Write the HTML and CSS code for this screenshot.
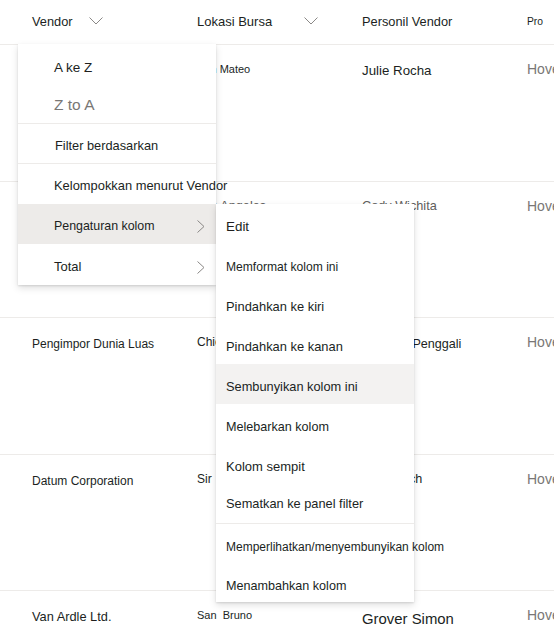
FILE: index.html
```html
<!DOCTYPE html>
<html lang="id">
<head>
<meta charset="utf-8">
<title>Vendor</title>
<link rel="stylesheet" href="styles.css">
</head>
<body>
<div class="page">
  <div class="table">
    <div class="row head">
      <div class="cell"><span class="h1">Vendor</span><svg class="chev chev-a" width="14" height="8" viewBox="0 0 14 8"><path d="M0.5 0.5 L7 7 L13.5 0.5" /></svg></div>
      <div class="cell"><span class="h2">Lokasi Bursa</span><svg class="chev chev-b" width="14" height="8" viewBox="0 0 14 8"><path d="M0.5 0.5 L7 7 L13.5 0.5" /></svg></div>
      <div class="cell h3">Personil Vendor</div>
      <div class="cell h4">Pro</div>
    </div>
    <div class="row">
      <div class="cell s12">Contoso Ltd.</div>
      <div class="cell s11">San Mateo</div>
      <div class="cell s13 low">Julie Rocha</div>
      <div class="cell s14 light">Hoverboard</div>
    </div>
    <div class="row">
      <div class="cell s12">Fabrikam, Inc.</div>
      <div class="cell s127 grey">Los Angeles</div>
      <div class="cell s127 grey">Cody Wichita</div>
      <div class="cell s14 light">Hoverboard</div>
    </div>
    <div class="row">
      <div class="cell s12 low">Pengimpor Dunia Luas</div>
      <div class="cell s12">Chicago</div>
      <div class="cell s126 low">Gonzalo Penggali</div>
      <div class="cell s14 light">Hoverboard</div>
    </div>
    <div class="row">
      <div class="cell s12 low">Datum Corporation</div>
      <div class="cell s12">Sir</div>
      <div class="cell s126">Ana Frisch</div>
      <div class="cell s14 light">Hoverboard</div>
    </div>
    <div class="row">
      <div class="cell s128 low">Van Ardle Ltd.</div>
      <div class="cell s11 pre">San  Bruno</div>
      <div class="cell s15 lower">Grover Simon</div>
      <div class="cell s14 light">Hoverboard</div>
    </div>
  </div>

  <div class="menu menu-main">
    <div class="item i-az">A ke Z</div>
    <div class="item i-za light">Z to A</div>
    <div class="divider"></div>
    <div class="item i-filter">Filter berdasarkan</div>
    <div class="divider"></div>
    <div class="item i-group">Kelompokkan menurut Vendor</div>
    <div class="item i-sub active">Pengaturan kolom<svg class="arrow" width="8" height="13" viewBox="0 0 8 13"><path d="M0.5 0.5 L7 6.5 L0.5 12.5" /></svg></div>
    <div class="item i-total">Total<svg class="arrow" width="8" height="13" viewBox="0 0 8 13"><path d="M0.5 0.5 L7 6.5 L0.5 12.5" /></svg></div>
  </div>

  <div class="menu menu-sub">
    <div class="sitem t134">Edit</div>
    <div class="sitem t122">Memformat kolom ini</div>
    <div class="sitem t129">Pindahkan ke kiri</div>
    <div class="sitem t129">Pindahkan ke kanan</div>
    <div class="sitem t128 hover">Sembunyikan kolom ini</div>
    <div class="sitem t126">Melebarkan kolom</div>
    <div class="sitem t130">Kolom sempit</div>
    <div class="sitem t128 pin">Sematkan ke panel filter</div>
    <div class="divider"></div>
    <div class="sitem t119">Memperlihatkan/menyembunyikan kolom</div>
    <div class="sitem t126 last">Menambahkan kolom</div>
  </div>
</div>
</body>
</html>
```

FILE: styles.css
```css
html, body {
  margin: 0;
  padding: 0;
  background: #ffffff;
}

body {
  width: 554px;
  height: 631px;
  overflow: hidden;
  font-family: "Liberation Sans", Arial, sans-serif;
  color: #201f1e;
}

.page {
  position: relative;
  width: 554px;
  height: 631px;
  overflow: hidden;
}

.table {
  display: flex;
  flex-direction: column;
}

.row {
  display: flex;
  align-items: flex-start;
  box-sizing: border-box;
  height: 136.5px;
  padding: 14px 0 0 32px;
  border-bottom: 1px solid #edebe9;
  overflow: hidden;
  white-space: nowrap;
}

.row.head {
  height: 45px;
  padding-top: 0;
  align-items: center;
}

.cell {
  flex: 0 0 165px;
  display: flex;
  align-items: center;
  line-height: 20px;
  white-space: nowrap;
}

.low { padding-top: 2px; }
.lower { padding-top: 4px; }

.pre { white-space: pre; }

.h1 { font-size: 12.8px; }
.h2 { font-size: 13px; }
.h3 { font-size: 12.8px; }
.h4 { font-size: 10.3px; }

.chev path, .arrow path {
  fill: none;
  stroke: #8a8886;
  stroke-width: 1;
}

.chev-a { margin-left: 16px; margin-top: -3px; }
.chev-b { margin-left: 32px; margin-top: -3px; }

.s11 { font-size: 11px; }
.s12 { font-size: 12px; }
.s126 { font-size: 12.6px; }
.s127 { font-size: 12.7px; }
.s128 { font-size: 12.8px; }
.s13 { font-size: 13.3px; }
.s14 { font-size: 14px; }
.s15 { font-size: 14.9px; }

.grey { color: #605e5c; }
.light { color: #797775; }

/* Menus (overlays) */
.menu {
  position: absolute;
  background: #ffffff;
  box-shadow: 0 3.2px 7.2px rgba(0, 0, 0, 0.13), 0 0.6px 1.8px rgba(0, 0, 0, 0.11);
  box-sizing: border-box;
}

.menu-main {
  left: 18px;
  top: 44px;
  width: 198px;
  height: 241px;
}

.menu-sub {
  left: 216px;
  top: 204px;
  width: 198px;
  height: 398px;
}

.divider {
  height: 1px;
  background: #edebe9;
}

.item {
  position: relative;
  display: flex;
  align-items: center;
  box-sizing: border-box;
  padding: 4px 0 0 36px;
  height: 40px;
  white-space: nowrap;
}

.i-az { height: 42px; font-size: 13.5px; }
.i-za { height: 37px; padding-top: 0; font-size: 15.5px; }
.i-filter { height: 39px; font-size: 12.8px; padding-left: 37px; }
.i-group { height: 40px; padding-top: 2px; font-size: 12.9px; }
.i-sub { font-size: 12.4px; }
.i-total { height: 41px; font-size: 13px; }

.item.active { background: #edebe9; }

.arrow {
  position: absolute;
  right: 11px;
  top: 50%;
  margin-top: -4px;
}

.sitem {
  display: flex;
  align-items: center;
  box-sizing: border-box;
  height: 40px;
  padding: 5px 0 0 10px;
  white-space: nowrap;
  overflow: visible;
}

.sitem.hover { background: #f3f2f1; }
.sitem.pin { height: 39px; padding-top: 0; }
.sitem.last { height: 38px; }

.t119 { font-size: 12px; }
.t122 { font-size: 12.1px; }
.t126 { font-size: 12.6px; }
.t128 { font-size: 12.8px; }
.t129 { font-size: 12.9px; }
.t130 { font-size: 13px; }
.t134 { font-size: 13.4px; }
```
